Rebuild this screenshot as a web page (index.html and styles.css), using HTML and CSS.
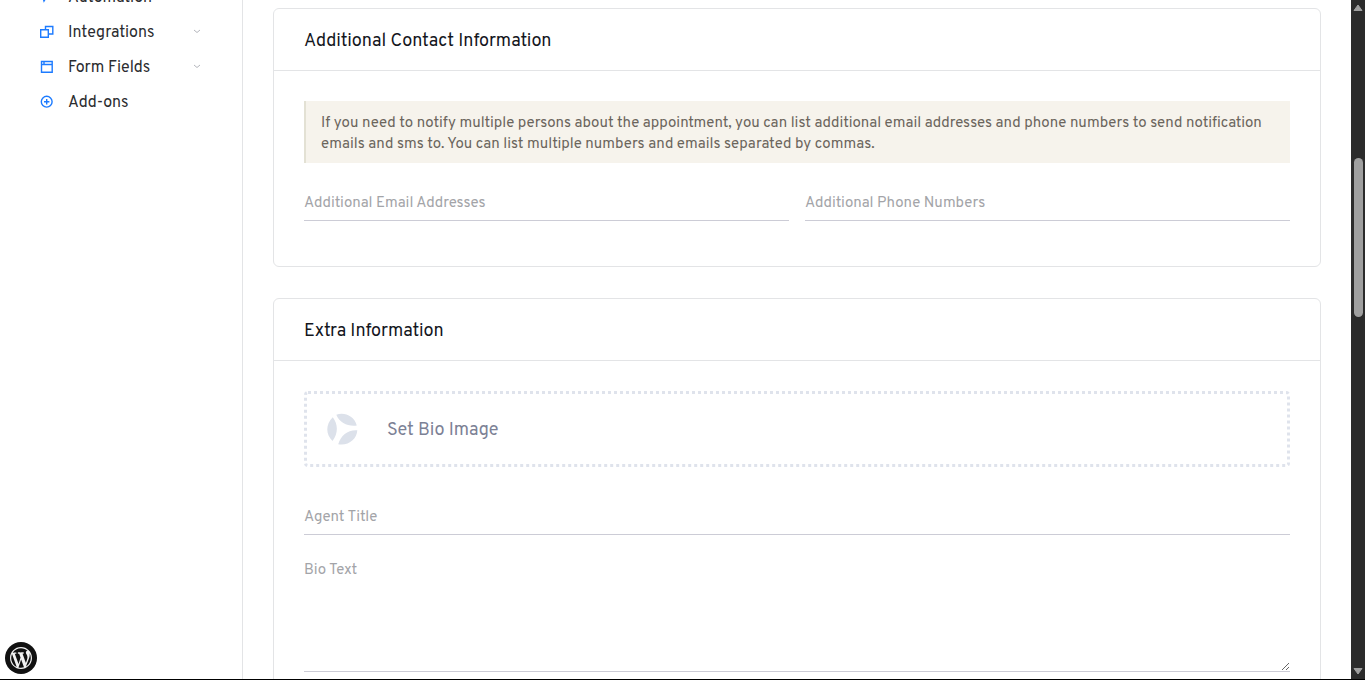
FILE: index.html
```html
<!DOCTYPE html>
<html lang="en">
<head>
<meta charset="utf-8">
<meta name="viewport" content="width=device-width, initial-scale=1">
<title>Agent</title>
<link rel="stylesheet" href="styles.css">
</head>
<body>
<div class="app">
  <nav class="sidebar">
    <ul class="menu">
      <li><a class="menu-item" href="#">
        <svg class="menu-icon" viewBox="0 0 14 14"><path d="M1 1.500h9L4 11z"/></svg>
        <span class="menu-label">Automation</span></a></li>
      <li><a class="menu-item" href="#">
        <svg class="menu-icon" viewBox="0 0 14 14"><path d="M5.500 4.500v-3h7.300v7.500H8.500M.7 4.700h7.600v7.600H.7z"/></svg>
        <span class="menu-label">Integrations</span>
        <svg class="chevron" viewBox="0 0 8 5"><path d="m1 1 3 2.500L7 1"/></svg></a></li>
      <li><a class="menu-item" href="#">
        <svg class="menu-icon" viewBox="0 0 14 14"><path d="M1.500 1.500h10.700v10.700H1.500zM1.500 4.500h10.700M4 1.500v3"/></svg>
        <span class="menu-label">Form Fields</span>
        <svg class="chevron" viewBox="0 0 8 5"><path d="m1 1 3 2.500L7 1"/></svg></a></li>
      <li><a class="menu-item" href="#">
        <svg class="menu-icon" viewBox="0 0 14 14"><circle cx="6.700" cy="6.700" r="5.400"/><path d="M6.700 4v5.400M4 6.700h5.400"/></svg>
        <span class="menu-label">Add-ons</span></a></li>
    </ul>
  </nav>

  <main class="content">
    <section class="card">
      <h3 class="card-title">Additional Contact Information</h3>
      <div class="card-body">
        <p class="note">If you need to notify multiple persons about the appointment, you can list additional email addresses and phone numbers to send notification emails and sms to. You can list multiple numbers and emails separated by commas.</p>
        <div class="row">
          <input class="field" type="text" aria-label="Additional Email Addresses" placeholder="Additional Email Addresses">
          <input class="field" type="text" aria-label="Additional Phone Numbers" placeholder="Additional Phone Numbers">
        </div>
      </div>
    </section>

    <section class="card">
      <h3 class="card-title">Extra Information</h3>
      <div class="card-body">
        <button class="uploader" type="button">
          <svg class="uploader-icon" viewBox="0 0 32 32"><path d="M6.800 4.200C12 11 12.500 20 6.500 28C-.5 21.500-.5 11 6.800 4.200zM10.300 1.800C18-1.200 28 2.500 30.800 12.500C22 13.500 14 10.500 10.300 1.800zM31.300 17.200C31 26 22.500 33 12.200 31.200C15 22 22 16.500 31.300 17.200z"/></svg>
          <span>Set Bio Image</span>
        </button>
        <input class="field" type="text" aria-label="Agent Title" placeholder="Agent Title">
        <textarea class="field field-area" aria-label="Bio Text" placeholder="Bio Text"></textarea>
      </div>
    </section>
  </main>

  <div class="scrollbar" aria-hidden="true">
    <svg class="arrow" viewBox="0 0 10 8"><path d="M5 1 9 6.500H1z"/></svg>
    <div class="track"><div class="thumb"></div></div>
    <svg class="arrow" viewBox="0 0 10 8"><path d="M5 7 1 1.500h8z"/></svg>
  </div>
</div>

<a class="wp-link" href="#" aria-label="WordPress">
  <svg class="wp-logo" viewBox="0 0 20 20"><path d="M20 10c0-5.510-4.490-10-10-10C4.480 0 0 4.490 0 10c0 5.520 4.480 10 10 10 5.510 0 10-4.480 10-10zM7.780 15.370L4.370 6.220c.55-.02 1.170-.08 1.170-.08.5-.06.44-1.130-.06-1.110 0 0-1.450.11-2.370.11-.18 0-.37 0-.58-.01C4.120 2.690 6.870 1.110 10 1.110c2.330 0 4.450.87 6.050 2.340-.68-.11-1.650.39-1.650 1.580 0 .74.45 1.360.9 2.100.35.61.55 1.360.55 2.460 0 1.490-1.400 5-1.400 5l-3.030-8.370c.54-.02.82-.17.82-.17.5-.05.44-1.250-.06-1.220 0 0-1.440.12-2.380.12-.87 0-2.330-.12-2.330-.12-.5-.03-.56 1.200-.06 1.220l.92.08 1.260 3.410zM17.410 10c.24-.64.74-1.870.43-4.250.7 1.290 1.050 2.710 1.050 4.250 0 3.290-1.730 6.240-4.400 7.780.97-2.590 1.940-5.200 2.920-7.780zM6.100 18.090C3.120 16.650 1.110 13.530 1.110 10c0-1.300.23-2.480.72-3.590C3.250 10.300 4.670 14.200 6.100 18.090zm4.030-6.630l2.580 6.980c-.86.29-1.760.45-2.710.45-.79 0-1.570-.11-2.290-.33.81-2.380 1.620-4.740 2.420-7.100z"/></svg>
</a>
</body>
</html>
```

FILE: styles.css
```css
* {
  box-sizing: border-box;
}

body {
  margin: 0;
  background: #fff;
  color: #1f222b;
  font-family: Overpass, Roboto, "Liberation Sans", sans-serif;
  font-size: 15px;
}

.app {
  display: grid;
  grid-template-columns: 243px minmax(0, 1fr) 14px;
  height: 100vh;
  overflow: hidden;
  border-bottom: 1px solid #000;
}

.sidebar {
  border-right: 1px solid #e3e4e6;
  overflow: hidden;
}

.menu {
  list-style: none;
  margin: -21px 0 0;
  padding: 0 41px 0 40px;
}

.menu-item {
  display: flex;
  align-items: center;
  gap: 14px;
  height: 35px;
  color: #2b2c30;
  font-size: 16px;
  text-decoration: none;
}

.menu-label {
  flex: 1;
  padding-top: 2px;
}

.menu-icon {
  width: 14px;
  height: 14px;
  fill: none;
  stroke: #1d7bff;
  stroke-width: 1.4;
}

.chevron {
  width: 8px;
  height: 5px;
  fill: none;
  stroke: #b4b6bc;
}

.content {
  padding: 8px 30px 0;
  overflow: hidden;
}

.card {
  margin-bottom: 31px;
  border: 1px solid #e3e4e6;
  border-radius: 6px;
}

.card-title {
  margin: 0;
  padding: 21px 30px 16px;
  border-bottom: 1px solid #e3e4e6;
  color: #14161d;
  font-size: 18px;
  font-weight: 400;
  line-height: 24px;
}

.card-body {
  padding: 30px;
}

.note {
  margin: 0 0 20px;
  padding: 12px 15px 8px;
  border-left: 2px solid #e3e1d4;
  background: #f6f3ec;
  color: #6b655c;
  font-size: 15px;
  line-height: 21px;
}

.row {
  display: grid;
  grid-template-columns: 1fr 1fr;
  gap: 16px;
}

.field {
  display: block;
  width: 100%;
  height: 38px;
  margin: 0 0 15px;
  padding: 10px 0 6px;
  border: 0;
  border-bottom: 1px solid #ccccd6;
  border-radius: 0;
  background: none;
  color: #1f222b;
  font: inherit;
  line-height: 21px;
}

.field::placeholder {
  color: #a3a4a8;
  opacity: 1;
}

.field-area {
  height: 122px;
  resize: vertical;
}

.uploader {
  display: flex;
  align-items: center;
  gap: 29px;
  width: 100%;
  height: 76px;
  margin: 0 0 30px;
  padding: 0 19px;
  border: 3px dotted #dfe3ec;
  border-radius: 4px;
  background: none;
  color: #7c8195;
  font: inherit;
  font-size: 18px;
}

.uploader span {
  padding-top: 2px;
}

.uploader-icon {
  width: 32px;
  height: 32px;
  fill: #dce1ea;
}

.scrollbar {
  display: flex;
  flex-direction: column;
  align-items: center;
  justify-content: space-between;
  padding: 4px 0;
  background: #2b2b2b;
}

.arrow {
  width: 10px;
  height: 8px;
  fill: #9f9f9f;
  stroke: #9f9f9f;
  stroke-linejoin: round;
}

.track {
  flex: 1;
  width: 9px;
  padding-top: 146px;
}

.thumb {
  height: 159px;
  border-radius: 5px;
  background: #9f9f9f;
}

.wp-link {
  position: fixed;
  bottom: 6px;
  left: 5px;
  display: grid;
  place-items: center;
  width: 32px;
  height: 32px;
  border-radius: 50%;
  background: #111;
}

.wp-logo {
  width: 22px;
  height: 22px;
  fill: #f2f2f2;
}
```
